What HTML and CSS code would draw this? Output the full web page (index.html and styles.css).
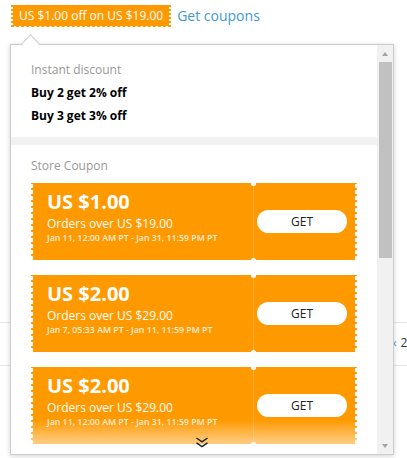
FILE: index.html
```html
<!DOCTYPE html>
<html>
<head>
<meta charset="utf-8">
<link rel="stylesheet" href="styles.css">
</head>
<body>
<div class="page">
  <div class="promo">
    <span class="badge">US $1.00 off on US $19.00</span>
    <a class="link">Get coupons</a>
  </div>
  <div class="below"><span class="prev">‹</span><span class="num">2</span></div>

  <div class="popup">
    <div class="notch"></div>
    <div class="scroll">
      <div class="section instant">
        <div class="label">Instant discount</div>
        <div class="rule first">Buy 2 get 2% off</div>
        <div class="rule">Buy 3 get 3% off</div>
      </div>
      <div class="sep"></div>
      <div class="section store">
        <div class="label">Store Coupon</div>
        <div class="coupons">
          <div class="coupon">
            <div class="c-left">
              <div class="c-amount">US $1.00</div>
              <div class="c-cond">Orders over US $19.00</div>
              <div class="c-date">Jan 11, 12:00 AM PT - Jan 31, 11:59 PM PT</div>
            </div>
            <div class="c-div"></div>
            <div class="c-right"><span class="get">GET</span></div>
          </div>
          <div class="coupon">
            <div class="c-left">
              <div class="c-amount">US $2.00</div>
              <div class="c-cond">Orders over US $29.00</div>
              <div class="c-date">Jan 7, 05:33 AM PT - Jan 11, 11:59 PM PT</div>
            </div>
            <div class="c-div"></div>
            <div class="c-right"><span class="get">GET</span></div>
          </div>
          <div class="coupon">
            <div class="c-left">
              <div class="c-amount">US $2.00</div>
              <div class="c-cond">Orders over US $29.00</div>
              <div class="c-date">Jan 11, 12:00 AM PT - Jan 31, 11:59 PM PT</div>
            </div>
            <div class="c-div"></div>
            <div class="c-right"><span class="get">GET</span></div>
          </div>
        </div>
      </div>
      <div class="fade"></div>
    </div>
    <div class="scrollbar">
      <div class="sb-btn"><span class="arr-up"></span></div>
      <div class="sb-thumb"></div>
      <div class="sb-space"></div>
      <div class="sb-btn"><span class="arr-down"></span></div>
    </div>
    <svg class="more" width="14" height="11" viewBox="0 0 14 11">
      <path d="M1.5 1 L7 4.8 L12.5 1" fill="none" stroke="#222" stroke-width="1.5"/>
      <path d="M1.5 5.8 L7 9.6 L12.5 5.8" fill="none" stroke="#222" stroke-width="1.5"/>
    </svg>
  </div>
</div>
</body>
</html>
```

FILE: styles.css
```css
* { box-sizing: border-box; }
body {
  margin: 0;
  font-family: "Open Sans", "Liberation Sans", sans-serif;
  background: #fff;
}
.page {
  position: relative;
  height: 458px;
  overflow: hidden;
}
.promo {
  display: flex;
  align-items: flex-start;
  gap: 6px;
  padding: 5px 0 0 11px;
  height: 27px;
}
.badge {
  display: inline-block;
  height: 22px;
  background: #ff9900;
  background-clip: padding-box;
  color: #fff;
  font-size: 12px;
  line-height: 21px;
  padding: 0 6px;
  border-left: 2px dotted #ff9900;
  border-right: 2px dotted #ff9900;
  border-bottom: 1px dashed #ff9900;
  white-space: nowrap;
}
.link {
  font-size: 14px;
  line-height: 22px;
  color: #3d98d3;
  cursor: pointer;
}
.below {
  margin-top: 295px;
  height: 44px;
  border-top: 1px solid #e6e6e6;
  border-bottom: 1px solid #e6e6e6;
  padding-left: 393px;
  white-space: nowrap;
  font-size: 12px;
  line-height: 40px;
}
.prev { color: #3d98d3; margin-right: 4px; }
.num { color: #333; }

.popup {
  position: absolute;
  left: 10px;
  top: 44px;
  width: 384px;
  height: 411px;
  border: 1px solid #cdcdcd;
  background: #fff;
  box-shadow: 0 1px 5px rgba(0, 0, 0, 0.18);
  display: flex;
}
.notch {
  position: absolute;
  left: 13px;
  top: -8px;
  width: 13px;
  height: 13px;
  background: #fff;
  border-left: 1px solid #cdcdcd;
  border-top: 1px solid #cdcdcd;
  transform: rotate(45deg);
  z-index: 2;
}
.scroll {
  flex: 1;
  position: relative;
  overflow: hidden;
  padding-top: 17px;
}
.section { padding: 0 20px; }
.instant { padding-bottom: 10px; }
.store { padding-top: 13px; }
.label {
  font-size: 12px;
  line-height: 16px;
  color: #999;
}
.rule {
  font-size: 12px;
  font-weight: 700;
  line-height: 23px;
  color: #000;
}
.rule.first { margin-top: 3px; }
.sep {
  height: 8px;
  background: #f2f2f2;
}
.coupons {
  margin-top: 9px;
  display: flex;
  flex-direction: column;
  gap: 15px;
}
.coupon {
  position: relative;
  width: 326px;
  height: 77px;
  background: #ff9900;
  display: flex;
  color: #fff;
}
.coupon::before,
.coupon::after {
  content: "";
  position: absolute;
  top: 0;
  bottom: 0;
  width: 3px;
  background-size: 3px 6px;
  background-repeat: repeat-y;
}
.coupon::before {
  left: 0;
  background-image: radial-gradient(circle at 0 3px, #fff 2px, transparent 2.6px);
}
.coupon::after {
  right: 0;
  background-image: radial-gradient(circle at 3px 3px, #fff 2px, transparent 2.6px);
}
.c-left {
  width: 222px;
  padding: 5px 0 0 16px;
  white-space: nowrap;
}
.c-amount {
  font-size: 20px;
  font-weight: 700;
  line-height: 27px;
}
.c-cond {
  font-size: 12px;
  line-height: 17px;
}
.c-date {
  font-size: 8.8px;
  font-weight: 600;
  line-height: 12px;
  color: rgba(255, 255, 255, 0.85);
}
.c-div {
  position: relative;
  width: 1px;
  background: rgba(255, 255, 255, 0.22);
}
.c-div::before,
.c-div::after {
  content: "";
  position: absolute;
  left: -2px;
  width: 5px;
  height: 5px;
  border-radius: 50%;
  background: #fff;
}
.c-div::before { top: -2.5px; }
.c-div::after { bottom: -2.5px; }
.c-right {
  flex: 1;
  display: flex;
  align-items: center;
  padding-left: 3px;
}
.get {
  width: 90px;
  height: 23px;
  border-radius: 12px;
  background: #fff;
  color: #222;
  font-size: 12px;
  line-height: 23px;
  text-align: center;
}
.fade {
  position: absolute;
  left: 0;
  right: 0;
  bottom: 0;
  height: 34px;
  background: linear-gradient(rgba(255, 255, 255, 0), rgba(255, 255, 255, 0.45) 60%, rgba(255, 255, 255, 0.6));
}
.more {
  position: absolute;
  left: calc(50% - 7px);
  bottom: 6px;
  z-index: 3;
}
.scrollbar {
  width: 16px;
  background: #f1f1f1;
  display: flex;
  flex-direction: column;
}
.sb-btn {
  height: 17px;
  display: flex;
  align-items: center;
  justify-content: center;
}
.arr-up {
  width: 0;
  height: 0;
  border-left: 3.5px solid transparent;
  border-right: 3.5px solid transparent;
  border-bottom: 4px solid #a3a3a3;
}
.arr-down {
  width: 0;
  height: 0;
  border-left: 3.5px solid transparent;
  border-right: 3.5px solid transparent;
  border-top: 4px solid #a3a3a3;
}
.sb-thumb {
  height: 196px;
  width: 13px;
  margin-left: 2px;
  background: #c1c1c1;
}
.sb-space { flex: 1; }
```
